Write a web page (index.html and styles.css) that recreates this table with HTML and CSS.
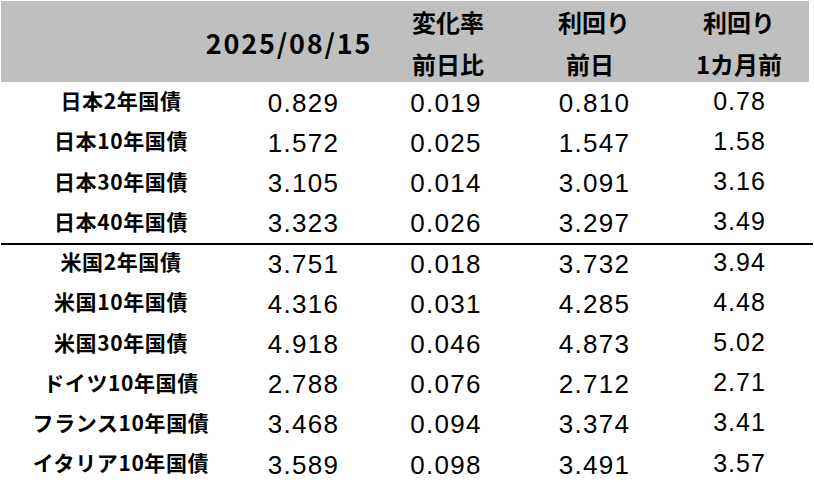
FILE: index.html
```html
<!DOCTYPE html>
<html lang="ja">
<head>
<meta charset="utf-8">
<title>国債利回り</title>
<link rel="stylesheet" href="styles.css">
</head>
<body>
<div class="page">
  <div class="table">
    <div class="row head">
      <div class="hc"></div>
      <div class="hc date">2025/08/15</div>
      <div class="hc c3"><span>変化率</span><span>前日比</span></div>
      <div class="hc c4"><span>利回り</span><span class="zen">前日</span></div>
      <div class="hc c5"><span>利回り</span><span>1カ月前</span></div>
    </div>
    <div class="row"><div class="lbl">日本2年国債</div><div class="num">0.829</div><div class="num c3">0.019</div><div class="num">0.810</div><div class="num c5">0.78</div></div>
    <div class="row"><div class="lbl">日本10年国債</div><div class="num">1.572</div><div class="num c3">0.025</div><div class="num">1.547</div><div class="num c5">1.58</div></div>
    <div class="row"><div class="lbl">日本30年国債</div><div class="num">3.105</div><div class="num c3">0.014</div><div class="num">3.091</div><div class="num c5">3.16</div></div>
    <div class="row"><div class="lbl">日本40年国債</div><div class="num">3.323</div><div class="num c3">0.026</div><div class="num">3.297</div><div class="num c5">3.49</div></div>
    <div class="row sep"><div class="lbl">米国2年国債</div><div class="num">3.751</div><div class="num c3">0.018</div><div class="num">3.732</div><div class="num c5">3.94</div></div>
    <div class="row"><div class="lbl">米国10年国債</div><div class="num">4.316</div><div class="num c3">0.031</div><div class="num">4.285</div><div class="num c5">4.48</div></div>
    <div class="row"><div class="lbl">米国30年国債</div><div class="num">4.918</div><div class="num c3">0.046</div><div class="num">4.873</div><div class="num c5">5.02</div></div>
    <div class="row"><div class="lbl">ドイツ10年国債</div><div class="num">2.788</div><div class="num c3">0.076</div><div class="num">2.712</div><div class="num c5">2.71</div></div>
    <div class="row"><div class="lbl">フランス10年国債</div><div class="num">3.468</div><div class="num c3">0.094</div><div class="num">3.374</div><div class="num c5">3.41</div></div>
    <div class="row"><div class="lbl">イタリア10年国債</div><div class="num">3.589</div><div class="num c3">0.098</div><div class="num">3.491</div><div class="num c5">3.57</div></div>
  </div>
</div>
</body>
</html>
```

FILE: styles.css
```css
html, body {
  margin: 0;
  padding: 0;
  background: #ffffff;
}

.page {
  padding: 1px 0 0 1px;
  width: 813px;
  height: 488px;
  overflow: hidden;
  color: #000000;
}

.table {
  width: 812px;
}

.row {
  display: grid;
  grid-template-columns: 240px 124px 161px 136px 147px;
  height: 40.24px;
  box-sizing: border-box;
}

.row.sep {
  border-top: 2px solid #000000;
  padding-bottom: 2px;
}

.head {
  width: 808px;
  height: 81px;
  background: #bfbfbf;
}

.hc {
  display: flex;
  flex-direction: column;
  justify-content: center;
  align-items: center;
  padding-bottom: 6px;
  font-family: "Noto Sans CJK JP", sans-serif;
  font-weight: 700;
  font-size: 24px;
  line-height: 42px;
  white-space: nowrap;
}

.hc.date {
  font-size: 27px;
  letter-spacing: 1.8px;
  padding-right: 28px;
}

.hc.c3 {
  padding-left: 5px;
}

.hc.c4 .zen {
  margin-right: 8px;
}

.hc.c5 {
  padding-left: 7px;
}

.lbl {
  display: flex;
  align-items: center;
  justify-content: center;
  padding-bottom: 4px;
  font-family: "Noto Sans CJK JP", sans-serif;
  font-weight: 700;
  font-size: 21px;
  letter-spacing: 0.6px;
  white-space: nowrap;
}

.num {
  display: flex;
  align-items: center;
  justify-content: center;
  padding-top: 2px;
  padding-left: 1px;
  font-family: "Liberation Sans", Arial, sans-serif;
  font-size: 26px;
  letter-spacing: 1.3px;
}

.num.c5 {
  padding-top: 0;
  padding-bottom: 2px;
  padding-left: 8px;
  font-size: 25px;
  letter-spacing: 1px;
}
```
